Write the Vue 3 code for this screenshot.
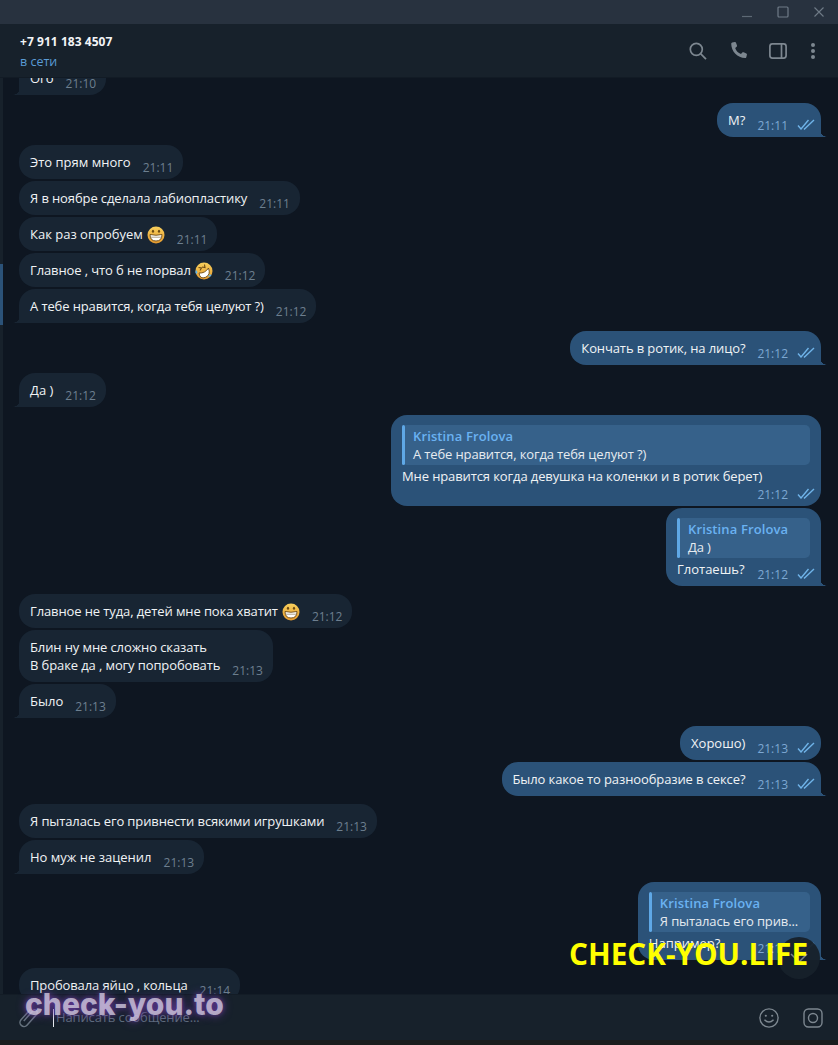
<template>
  <div class="window">
    <div class="titlebar">
      <svg width="12" height="12" viewBox="0 0 12 12"><path d="M1 10.5h10" stroke="#5d6975" stroke-width="1.2" /></svg>
      <svg width="12" height="12" viewBox="0 0 12 12"><rect x="1" y="1" width="10" height="10" rx="1" fill="none" stroke="#6f7b87" stroke-width="1.2" /></svg>
      <svg width="12" height="12" viewBox="0 0 12 12"><path d="M1.5 1.5l9 9M10.5 1.5l-9 9" stroke="#6f7b87" stroke-width="1.1" /></svg>
    </div>

    <header class="topbar">
      <div class="peer">
        <strong>+7 911 183 4507</strong>
        <span>в сети</span>
      </div>
      <div class="actions">
        <svg width="20" height="20" viewBox="0 0 20 20" fill="none" stroke="#7d8790" stroke-width="1.7"><circle cx="8.3" cy="8.3" r="6" /><path d="M12.8 12.8l5.2 5.4" /></svg>
        <svg class="phone" width="20" height="20" viewBox="0 0 20 20"><path d="M3.2 1.6l2.6-.6c.6-.1 1 .2 1.2.7l1 2.8c.2.5 0 1-.4 1.300L6.200 7c.8 2.700 3 5 5.800 6l1.300-1.400c.4-.4.900-.5 1.400-.3l2.600 1.100c.5.200.8.700.6 1.300l-.6 2.500c-.2.600-.6.900-1.200.9C8.500 17 2.300 10.500 2.200 2.800c0-.6.400-1.100 1-1.200z" fill="#7d8790" /></svg>
        <svg width="18" height="16" viewBox="0 0 18 16" fill="none" stroke="#7d8790" stroke-width="1.700"><rect x=".9" y=".9" width="16.200" height="14.200" rx="2.500" /><path d="M12.500 1v14" /></svg>
        <svg class="dots" width="6" height="18" viewBox="0 0 6 18" fill="#7d8790"><circle cx="3" cy="3" r="2" /><circle cx="3" cy="9" r="2" /><circle cx="3" cy="15" r="2" /></svg>
      </div>
    </header>

    <main class="body">
      <div class="strip"><i></i></div>
      <svg class="defs" width="0" height="0"><defs><linearGradient id="face" x1="0" y1="0" x2="0" y2="1"><stop offset="0" stop-color="#f7cf5c" /><stop offset="1" stop-color="#e59a2f" /></linearGradient></defs></svg>
      <div class="chat">
        <div
          v-for="m in messages"
          :key="m.id"
          :class="['bubble', m.out ? 'out' : 'in', { tail: m.tail, gap: m.gap, stack: m.stack, hasreply: m.reply }]"
        >
          <div v-if="m.reply" class="reply">
            <b>Kristina Frolova</b>
            <span>{{ m.reply }}</span>
          </div>
          <div class="line">
            <span :class="['text', { short: m.text.length < 20 }]">{{ m.text }}<svg v-if="m.emoji === 'grin'" class="emoji" viewBox="0 0 18 18"><circle cx="9" cy="9" r="8.500" fill="url(#face)" /><path d="M3 8.500q6 1.500 12 0Q15 15 9 15T3 8.500z" fill="#fff" stroke="#6b4a14" stroke-width=".9" /><path d="M3.500 11.200h11" stroke="#8d7a55" stroke-width=".7" /><ellipse cx="6" cy="5.200" rx="1.100" ry="1.500" fill="#6b4a14" /><ellipse cx="12" cy="5.200" rx="1.100" ry="1.500" fill="#6b4a14" /></svg><svg v-if="m.emoji === 'rofl'" class="emoji" viewBox="0 0 18 18"><circle cx="9" cy="9" r="8.500" fill="url(#face)" /><path d="M4 11q6 .5 9.500-5 2.500 7-3 9.300T4 11z" fill="#fff" stroke="#6b4a14" stroke-width=".9" /><path d="M3.500 5.500l3 .5-1.500 2.500M9.500 2.500l.5 3-2.800-.5" fill="none" stroke="#6b4a14" stroke-width="1.100" /><path d="M1 8q-1.500 3 .5 4 2-1.500-.5-4zM13 14.500q3 .5 3.500-1.500-2-1.500-3.500 1.500z" fill="#5cb2ea" /></svg></span>
            <span class="meta">
              <span class="time">{{ m.time }}</span>
              <svg v-if="m.out" class="check" width="18" height="11" viewBox="0 0 18 11" fill="none" stroke="#6fb3e8" stroke-width="1.400"><path d="M1 6.500l3 3.500L11.500 1" /><path d="M7 9.500l.5.500L17 1" /></svg>
            </span>
          </div>
        </div>
      </div>
      <button class="down">
        <svg width="18" height="10" viewBox="0 0 18 10" fill="none" stroke="#7d8790" stroke-width="1.500"><path d="M1 1l8 8 8-8" /></svg>
      </button>
    </main>

    <footer class="composer">
      <svg class="clip" width="22" height="24" viewBox="0 0 22 24" fill="none" stroke="#66727e" stroke-width="1.500"><path transform="rotate(42 11 12)" d="M7 4v14a4 4 0 0 0 8 0V3.500a2.600 2.600 0 0 0-5.200 0V17" /></svg>
      <i class="caret"></i>
      <span class="placeholder">Написать сообщение...</span>
      <svg class="smile" width="20" height="20" viewBox="0 0 22 22" fill="none" stroke="#7d8790" stroke-width="1.500"><circle cx="11" cy="11" r="10" /><circle cx="7.500" cy="8.500" r="1.200" fill="#7d8790" stroke="none" /><circle cx="14.500" cy="8.500" r="1.200" fill="#7d8790" stroke="none" /><path d="M6 13q5 5 10 0" stroke-width="1.600" /></svg>
      <svg width="20" height="20" viewBox="0 0 20 20" fill="none" stroke="#7d8790" stroke-width="1.400"><rect x="1" y="1" width="18" height="18" rx="4.500" /><circle cx="10" cy="10" r="4.500" /></svg>
    </footer>
    <div class="edge"></div>

    <div class="mark-life">CHECK-YOU.LIFE</div>
    <div class="mark-to">check-you.to</div>
  </div>
</template>

<script setup>
const messages = [
  { id: 1, text: 'Ого', time: '21:10', tail: true },
  { id: 2, text: 'М?', time: '21:11', out: true, tail: true, gap: true },
  { id: 3, text: 'Это прям много', time: '21:11', gap: true },
  { id: 4, text: 'Я в ноябре сделала лабиопластику', time: '21:11' },
  { id: 5, text: 'Как раз опробуем', time: '21:11', emoji: 'grin' },
  { id: 6, text: 'Главное , что б не порвал', time: '21:12', emoji: 'rofl' },
  { id: 7, text: 'А тебе нравится, когда тебя целуют ?)', time: '21:12', tail: true },
  { id: 8, text: 'Кончать в ротик, на лицо?', time: '21:12', out: true, tail: true, gap: true },
  { id: 9, text: 'Да )', time: '21:12', tail: true, gap: true },
  { id: 10, text: 'Мне нравится когда девушка на коленки и в ротик берет)', time: '21:12', out: true, gap: true, stack: true, reply: 'А тебе нравится, когда тебя целуют ?)' },
  { id: 11, text: 'Глотаешь?', time: '21:12', out: true, tail: true, reply: 'Да )' },
  { id: 12, text: 'Главное не туда, детей мне пока хватит', time: '21:12', emoji: 'grin', gap: true },
  { id: 13, text: 'Блин ну мне сложно сказать\nВ браке да , могу попробовать', time: '21:13' },
  { id: 14, text: 'Было', time: '21:13', tail: true },
  { id: 15, text: 'Хорошо)', time: '21:13', out: true, gap: true },
  { id: 16, text: 'Было какое то разнообразие в сексе?', time: '21:13', out: true, tail: true },
  { id: 17, text: 'Я пыталась его привнести всякими игрушками', time: '21:13', gap: true },
  { id: 18, text: 'Но муж не заценил', time: '21:13', tail: true },
  { id: 19, text: 'Например?', time: '21:13', out: true, tail: true, gap: true, reply: 'Я пыталась его прив...' },
  { id: 20, text: 'Пробовала яйцо , кольца', time: '21:14', gap: true }
]
</script>

<style>
html, body { margin: 0; background: #0e1621; }
</style>

<style scoped>
.window { position: relative; width: 838px; height: 1045px; overflow: hidden; display: flex; flex-direction: column; font-family: "Open Sans", "Noto Sans", sans-serif; font-size: 13px; color: #f0f3f5; background: #0e1621; }

.titlebar { height: 24px; flex: none; background: #28323f; display: flex; justify-content: flex-end; align-items: center; gap: 24px; padding-right: 13px; box-sizing: border-box; }

.topbar { height: 54px; flex: none; box-sizing: border-box; background: #17212b; border-bottom: 1px solid #121b25; display: flex; justify-content: space-between; align-items: center; padding: 0 22px 0 20px; z-index: 2; }
.peer { display: flex; flex-direction: column; gap: 2px; padding-top: 2px; }
.peer strong { font-size: 12px; font-weight: 700; line-height: 18px; letter-spacing: 0.05px; color: #f2f4f6; }
.peer span { font-size: 12.5px; line-height: 18px; color: #5a9bd5; }
.actions { display: flex; align-items: center; gap: 20px; }
.phone { margin-left: 1px; }
.dots { margin-left: 3px; }

.body { position: relative; flex: 1; min-height: 0; display: flex; }
.strip { position: relative; width: 3px; flex: none; background: #17212b; }
.strip i { position: absolute; left: 0; top: 186px; width: 3px; height: 61px; background: #2b5278; }
.defs { position: absolute; }
.chat { flex: 1; min-width: 0; display: flex; flex-direction: column; gap: 2px; padding: 0 17px 0 16px; margin-top: -17px; }

.bubble { position: relative; flex: none; box-sizing: border-box; max-width: 100%; min-height: 34px; padding: 8px 10px 0 11px; border-radius: 16px; background: #182533; align-self: flex-start; }
.bubble.out { background: #2b5278; align-self: flex-end; padding-right: 6px; }
.bubble.gap { margin-top: 6px; }
.bubble.hasreply { padding: 10px 11px 8px; }
.bubble.stack { width: 430px; padding-bottom: 3px; }
.bubble.in.tail { border-bottom-left-radius: 0; }
.bubble.out.tail { border-bottom-right-radius: 0; }
.bubble.tail::after { content: ""; position: absolute; bottom: 0; width: 6px; height: 7px; }
.bubble.in.tail::after { left: -6px; background: radial-gradient(circle at 0 0, transparent 6.500px, #182533 7px); }
.bubble.out.tail::after { right: -6px; background: radial-gradient(circle at 100% 0, transparent 6.500px, #2b5278 7px); }

.line { display: flex; align-items: flex-end; justify-content: space-between; gap: 12px; }
.stack .line { flex-direction: column; align-items: stretch; gap: 0; }
.text { display: block; line-height: 18px; letter-spacing: -0.11px; white-space: pre-line; padding-bottom: 8px; }
.text.short { letter-spacing: 0; }
.hasreply .text { padding-bottom: 0; }
.meta { display: flex; align-items: center; gap: 9px; flex: none; height: 18px; margin-bottom: 2px; justify-content: flex-end; }
.hasreply .meta { margin: 0 -5px -6px 0; }
.stack .meta { margin: 1px -5px -1px 0; }
.time { font-size: 12px; line-height: 18px; color: #6d7f8f; }
.out .time { color: #7da8d3; }
.check { flex: none; margin-bottom: 3px; }

.emoji { display: inline-block; width: 18px; height: 18px; margin: -6px 0 -6px 4px; vertical-align: 1px; }

.reply { box-sizing: border-box; height: 40px; min-width: 133px; margin-bottom: 2px; padding: 2px 12px 0 11px; border-radius: 5px; background: #36618a; position: relative; display: flex; flex-direction: column; }
.reply::before { content: ""; position: absolute; left: 0; top: 0; bottom: 0; width: 3px; border-radius: 2px; background: #5fa8e6; }
.reply b { font-size: 13px; line-height: 18px; font-weight: 600; letter-spacing: 0.12px; color: #6ab2f2; }
.reply span { font-size: 13px; line-height: 18px; letter-spacing: -0.13px; color: #e6ebf0; white-space: nowrap; }

.down { position: absolute; right: 18px; top: 859px; width: 42px; height: 42px; padding: 0; border: 0; border-radius: 50%; background: #17212b; opacity: 0.95; display: flex; align-items: center; justify-content: center; }

.composer { height: 46px; flex: none; box-sizing: border-box; background: #17212b; border-top: 1px solid #131c26; display: flex; align-items: center; padding: 0 15px 0 17px; z-index: 2; }
.clip { flex: none; }
.caret { width: 1px; height: 18px; margin-left: 14px; background: #e6ebf0; flex: none; }
.placeholder { margin: 0 0 2px 2px; flex: 1; font-size: 13px; letter-spacing: -0.13px; color: #5e6d7c; }
.smile { margin-right: 24px; }
.edge { height: 5px; flex: none; background: #1b1c1d; z-index: 2; }

.mark-life { position: absolute; left: 569px; top: 934px; z-index: 3; font-size: 29.7px; line-height: 40px; font-weight: 700; color: #ffff00; white-space: nowrap; }
.mark-to { position: absolute; left: 25px; top: 985px; z-index: 3; font-family: Inter, "Open Sans", sans-serif; font-size: 30px; line-height: 38px; font-weight: 800; color: rgba(222, 216, 232, 0.72); text-shadow: 0 0 10px rgba(118, 64, 180, 0.8), 0 0 4px rgba(118, 64, 180, 0.5); white-space: nowrap; }
</style>
